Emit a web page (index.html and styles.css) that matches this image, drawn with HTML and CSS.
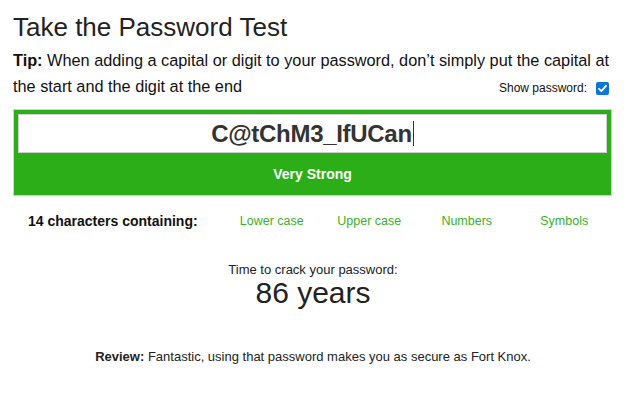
FILE: index.html
```
<!DOCTYPE html>
<html>
<head>
<meta charset="utf-8">
<link rel="stylesheet" href="styles.css">
</head>
<body>
<div class="page">
  <h1 class="title">Take the Password Test</h1>
  <p class="tip"><b>Tip:</b> When adding a capital or digit to your password, don’t simply put the capital at the start and the digit at the end<span class="show"><label>Show password:</label><span class="check"><svg width="13" height="13" viewBox="0 0 13 13"><rect x="0" y="0" width="13" height="13" rx="2" fill="#0b74d9"/><path d="M3 6.8 L5.4 9.2 L10 3.8" fill="none" stroke="#fff" stroke-width="1.8" stroke-linecap="round" stroke-linejoin="round"/></svg></span></span></p>
  <div class="meter">
    <div class="field"><span class="pw">C@tChM3_IfUCan</span><span class="caret"></span></div>
    <div class="strength">Very Strong</div>
  </div>
  <div class="contains">
    <div class="count">14 characters containing:</div>
    <div class="kind">Lower case</div>
    <div class="kind">Upper case</div>
    <div class="kind">Numbers</div>
    <div class="kind">Symbols</div>
  </div>
  <div class="crack">
    <div class="crack-label">Time to crack your password:</div>
    <div class="crack-time">86 years</div>
  </div>
  <p class="review"><b>Review:</b> Fantastic, using that password makes you as secure as Fort Knox.</p>
</div>
</body>
</html>
```
FILE: styles.css
```
html, body {
  margin: 0;
  padding: 0;
  background: #fff;
}
body {
  font-family: "Liberation Sans", Arial, sans-serif;
  color: #222;
}
.page {
  padding: 0 11px 0 13px;
}
.title {
  margin: 0;
  padding-top: 11px;
  font-size: 26px;
  font-weight: normal;
  line-height: 32px;
  color: #222;
}
.tip {
  margin: 4px 0 0;
  font-size: 16.3px;
  line-height: 26px;
  color: #111;
}
.tip b {
  font-weight: bold;
}
.show {
  float: right;
  display: inline-flex;
  align-items: center;
  gap: 9px;
  font-size: 12px;
  margin-top: 2px;
  margin-right: 4px;
}
.check {
  display: inline-flex;
}
.meter {
  margin: 10px 1px 0 0;
  background: #2cae18;
  border: 1px solid #b9e2b0;
  padding: 4px 4px 0;
}
.field {
  background: #fff;
  border: 1px solid #d0d0d0;
  height: 37px;
  display: flex;
  align-items: center;
  justify-content: center;
}
.pw {
  font-size: 24px;
  font-weight: bold;
  color: #333;
  letter-spacing: -0.3px;
}
.caret {
  display: inline-block;
  width: 1px;
  height: 25px;
  background: #333;
  margin-left: 1px;
}
.strength {
  height: 42px;
  display: flex;
  align-items: center;
  justify-content: center;
  color: #fff;
  font-weight: bold;
  font-size: 14px;
}
.contains {
  display: grid;
  grid-template-columns: 210px repeat(4, 1fr);
  margin-top: 17px;
  align-items: center;
}
.count {
  font-weight: bold;
  font-size: 14px;
  padding-left: 15px;
  color: #111;
}
.kind {
  text-align: center;
  color: #3bb12a;
  font-size: 12.5px;
}
.crack {
  text-align: center;
  margin-top: 33px;
}
.crack-label {
  font-size: 13px;
  color: #222;
}
.crack-time {
  font-size: 30px;
  line-height: 32px;
  color: #222;
}
.review {
  text-align: center;
  margin: 40px 0 0;
  font-size: 13px;
  color: #222;
}
```
